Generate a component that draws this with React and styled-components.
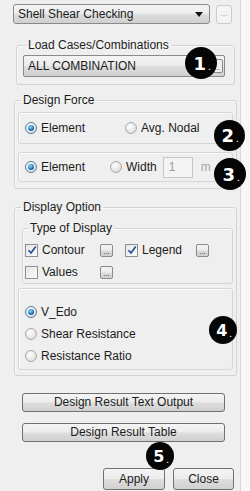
import styled, { createGlobalStyle } from 'styled-components';

const GlobalStyle = createGlobalStyle`
  html, body { margin: 0; padding: 0; background: #f8f8f8; }
  body {
    font-family: 'Liberation Sans', Arial, sans-serif;
    font-size: 12px;
    color: #1c1c1c;
  }
`;

const Panel = styled.div`
  position: relative;
  width: 241px;
  height: 491px;
  box-sizing: border-box;
  background: #efefef;
  border-right: 1px solid #d8d8d8;
  padding-top: 4px;
  display: flex;
  flex-direction: column;
`;

const TopRow = styled.div`
  display: flex;
  align-items: center;
  gap: 6px;
  padding-left: 13px;
  height: 20px;
`;

const winGradient = `linear-gradient(#f4f4f4 0%, #ececec 48%, #dddddd 52%, #d0d0d0 100%)`;

const Select = styled.div`
  width: 197px;
  height: 20px;
  box-sizing: border-box;
  border: 1px solid #8a8a8a;
  border-radius: 3px;
  background: ${winGradient};
  display: flex;
  align-items: center;
  justify-content: space-between;
  padding: 0 6px 0 4px;
`;

const Arrow = styled.span`
  width: 0;
  height: 0;
  border-left: 4px solid transparent;
  border-right: 4px solid transparent;
  border-top: 5px solid #111;
`;

const MoreBtn = styled.div`
  width: 16px;
  height: 19px;
  box-sizing: border-box;
  border: 1px solid ${(p) => (p.$disabled ? '#c4ccd4' : '#8a8a8a')};
  border-radius: 3px;
  background: ${(p) => (p.$disabled ? '#f4f4f4' : winGradient)};
  color: ${(p) => (p.$disabled ? '#a8a8a8' : '#222')};
  font-size: 9px;
  line-height: 14px;
  text-align: center;
`;

const Group = styled.fieldset`
  margin: ${(p) => p.$mt}px ${(p) => p.$mr}px 0 ${(p) => p.$ml}px;
  border: 1px solid #d3d3d3;
  border-radius: 3px;
  padding: ${(p) => p.$pad};
  min-width: 0;
  box-shadow: inset 1px 1px 0 #fafafa;
  display: flex;
  flex-direction: column;
`;

const Legend = styled.legend`
  padding: 0 2px;
  margin-left: 3px;
  font-size: 12px;
  line-height: 14px;
  color: #1c1c1c;
`;

const Combo = styled.div`
  height: 22px;
  box-sizing: border-box;
  border: 1px solid #8a8a8a;
  border-radius: 2px;
  background: ${winGradient};
  display: flex;
  align-items: center;
  justify-content: space-between;
  padding: 0 1px 0 4px;
  font-size: 12px;
`;

const ComboBtn = styled.span`
  width: 8px;
  height: 12px;
  border: 1px solid #8a8a8a;
  border-radius: 2px;
  background: #f0f0f0;
  font-size: 7px;
  line-height: 16px;
  text-align: center;
`;

const InnerBox = styled.div`
  height: ${(p) => p.$h}px;
  box-sizing: border-box;
  margin: ${(p) => p.$m};
  border: 1px solid #d6d6d6;
  border-radius: 3px;
  box-shadow: inset 1px 1px 0 #fbfbfb;
  display: flex;
  flex-direction: ${(p) => (p.$column ? 'column' : 'row')};
  align-items: ${(p) => (p.$column ? 'stretch' : 'center')};
  padding: ${(p) => p.$pad || '0 0 0 6px'};
`;

const Option = styled.label`
  display: flex;
  align-items: center;
  gap: 4px;
  width: ${(p) => (p.$w ? `${p.$w}px` : 'auto')};
  height: ${(p) => (p.$h ? `${p.$h}px` : 'auto')};
  flex-shrink: 0;
  white-space: nowrap;
`;

const Radio = styled.span`
  position: relative;
  width: 12px;
  height: 12px;
  box-sizing: border-box;
  border-radius: 50%;
  border: 1px solid ${(p) => (p.$on ? '#5a7a96' : '#a9a9a9')};
  background: radial-gradient(circle at 40% 35%, #ffffff, #dcdcdc 80%);
  flex-shrink: 0;

  &::after {
    content: '';
    display: ${(p) => (p.$on ? 'block' : 'none')};
    position: absolute;
    left: 2px;
    top: 2px;
    width: 6px;
    height: 6px;
    border-radius: 50%;
    background: radial-gradient(circle at 40% 35%, #8fdcff, #1b6fb5 60%, #0c3e70);
  }
`;

const Check = styled.span`
  width: 13px;
  height: 13px;
  box-sizing: border-box;
  border: 1px solid #8e8f8f;
  background: linear-gradient(135deg, #e6e6e6, #fbfbfb);
  display: flex;
  align-items: center;
  justify-content: center;
  flex-shrink: 0;
`;

const CheckRow = styled.div`
  display: flex;
  align-items: center;
  height: 22px;
`;

const Dots = styled.span`
  width: 13px;
  height: 13px;
  box-sizing: border-box;
  border: 1px solid #8a8a8a;
  border-radius: 2px;
  background: ${winGradient};
  font-size: 8px;
  line-height: 13px;
  text-align: center;
  margin-right: ${(p) => p.$mr || 0}px;
  flex-shrink: 0;
`;

const WidthInput = styled.div`
  width: 30px;
  height: 21px;
  box-sizing: border-box;
  border: 1px solid #bfc6cc;
  background: #f3f3f3;
  color: #9a9a9a;
  padding-left: 5px;
  line-height: 19px;
  margin-left: 6px;
`;

const Unit = styled.span`
  color: #a6a6a6;
  margin-left: 8px;
`;

const WideButton = styled.div`
  margin: ${(p) => p.$mt}px 0 0 22px;
  width: 203px;
  height: 19px;
  box-sizing: border-box;
  border: 1px solid #707070;
  border-radius: 3px;
  background: ${winGradient};
  text-align: center;
  line-height: 17px;
`;

const ActionRow = styled.div`
  display: flex;
  gap: 8px;
  margin: 26px 0 0 103px;
`;

const ActionButton = styled.div`
  width: ${(p) => p.$w}px;
  height: 22px;
  box-sizing: border-box;
  border: 1px solid #707070;
  border-radius: 3px;
  background: ${winGradient};
  text-align: center;
  line-height: 20px;
`;

const Badge = styled.div`
  position: absolute;
  left: ${(p) => p.$x - p.$d / 2}px;
  top: ${(p) => p.$y - p.$d / 2}px;
  width: ${(p) => p.$d}px;
  height: ${(p) => p.$d}px;
  border-radius: 50%;
  background: #050505;
  color: #fff;
  font-family: 'DejaVu Sans', sans-serif;
  font-weight: 700;
  font-size: ${(p) => (p.$d > 30 ? 18 : 16)}px;
  display: flex;
  align-items: center;
  justify-content: center;
  padding-left: 2px;
  box-sizing: border-box;

  small {
    font-size: 6px;
    margin-top: 8px;
    margin-left: 2px;
  }
`;

function Tick() {
  return (
    <svg width="10" height="10" viewBox="0 0 10 10">
      <path d="M1.5 5.2 L4 8 L8.8 1.5" fill="none" stroke="#2b4c9b" strokeWidth="1.7" />
    </svg>
  );
}

export default function App() {
  return (
    <>
      <GlobalStyle />
      <Panel>
        <TopRow>
          <Select>
            <span>Shell Shear Checking</span>
            <Arrow />
          </Select>
          <MoreBtn $disabled>...</MoreBtn>
        </TopRow>

        <Group $mt={14} $ml={16} $mr={5} $pad="3px 9px 7px 6px">
          <Legend>Load Cases/Combinations</Legend>
          <Combo>
            <span>ALL COMBINATION</span>
            <ComboBtn>..</ComboBtn>
          </Combo>
        </Group>

        <Group $mt={8} $ml={14} $mr={3} $pad="5px 3px 6px 3px">
          <Legend>Design Force</Legend>
          <InnerBox $h={32}>
            <Option $w={100}>
              <Radio $on />
              Element
            </Option>
            <Option>
              <Radio />
              Avg. Nodal
            </Option>
          </InnerBox>
          <InnerBox $h={30} $m="8px 0 0 0">
            <Option $w={85}>
              <Radio $on />
              Element
            </Option>
            <Option>
              <Radio />
              Width
            </Option>
            <WidthInput>1</WidthInput>
            <Unit>m</Unit>
          </InnerBox>
        </Group>

        <Group $mt={11} $ml={14} $mr={3} $pad="0 3px 5px 3px">
          <Legend>Display Option</Legend>
          <Group as="fieldset" $mt={7} $ml={4} $mr={0} $pad="4px 2px 0 2px">
            <Legend>Type of Display</Legend>
            <CheckRow>
              <Option $w={75}>
                <Check>
                  <Tick />
                </Check>
                Contour
              </Option>
              <Dots $mr={12}>...</Dots>
              <Option $w={71}>
                <Check>
                  <Tick />
                </Check>
                Legend
              </Option>
              <Dots>...</Dots>
            </CheckRow>
            <CheckRow>
              <Option $w={75}>
                <Check />
                Values
              </Option>
              <Dots>...</Dots>
            </CheckRow>
          </Group>
          <InnerBox $h={82} $m="4px 0 0 0" $column $pad="12px 0 0 6px">
            <Option $h={22}>
              <Radio $on />
              V_Edo
            </Option>
            <Option $h={22}>
              <Radio />
              Shear Resistance
            </Option>
            <Option $h={22}>
              <Radio />
              Resistance Ratio
            </Option>
          </InnerBox>
        </Group>

        <WideButton $mt={17}>Design Result Text Output</WideButton>
        <WideButton $mt={11}>Design Result Table</WideButton>

        <ActionRow>
          <ActionButton $w={62}>Apply</ActionButton>
          <ActionButton $w={61}>Close</ActionButton>
        </ActionRow>

        <Badge $x={201} $y={63} $d={32}>1<small>.</small></Badge>
        <Badge $x={229} $y={135} $d={31}>2<small>.</small></Badge>
        <Badge $x={230} $y={174} $d={32}>3<small>.</small></Badge>
        <Badge $x={223} $y={330} $d={28}>4<small>.</small></Badge>
        <Badge $x={160} $y={456} $d={28}>5<small>.</small></Badge>
      </Panel>
    </>
  );
}
